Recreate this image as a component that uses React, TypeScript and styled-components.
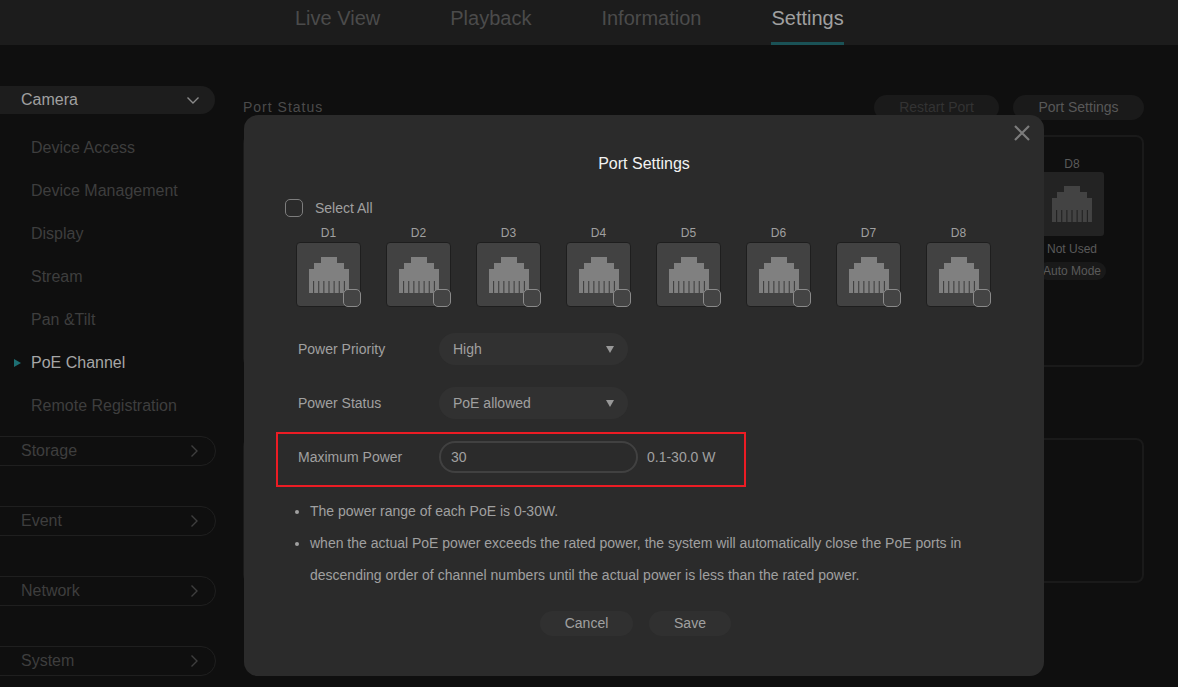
import styled, { createGlobalStyle } from 'styled-components';

const GlobalStyle = createGlobalStyle`
  html, body {
    margin: 0;
    padding: 0;
    height: 100%;
    background: #0f0f0f;
    overflow: hidden;
  }
  * {
    box-sizing: border-box;
  }
`;

const Page = styled.div`
  position: relative;
  width: 1178px;
  height: 687px;
  overflow: hidden;
  background: #0f0f0f;
  font-family: 'Liberation Sans', Arial, sans-serif;
`;

const Header = styled.div`
  height: 45px;
  background: #1c1c1c;
  display: flex;
  padding-left: 295px;
  gap: 70px;
`;

const Tab = styled.div<{ $active?: boolean }>`
  height: 45px;
  padding-top: 6px;
  font-size: 20px;
  line-height: 24px;
  color: ${(p) => (p.$active ? '#a0a0a0' : '#4b4b4b')};
  border-bottom: 3px solid ${(p) => (p.$active ? '#1a5256' : 'transparent')};
`;

const Body = styled.div`
  display: flex;
  padding-top: 41px;
`;

const Sidebar = styled.div`
  width: 216px;
  flex-shrink: 0;
  margin-right: 27px;
`;

const GroupPill = styled.div<{ $open?: boolean }>`
  height: ${(p) => (p.$open ? '28px' : '30px')};
  margin-left: -20px;
  margin-right: ${(p) => (p.$open ? '1px' : '0')};
  margin-bottom: ${(p) => (p.$open ? '0' : '40px')};
  padding: ${(p) => (p.$open ? '0 15px 0 41px' : '0 14px 0 40px')};
  border-radius: 15px;
  display: flex;
  align-items: center;
  justify-content: space-between;
  font-size: 16px;
  color: ${(p) => (p.$open ? '#a0a0a0' : '#3e3e3e')};
  background: ${(p) => (p.$open ? '#1d1d1d' : 'transparent')};
  border: ${(p) => (p.$open ? 'none' : '1px solid #1f1f1f')};
`;

const SubList = styled.div`
  padding-top: 12px;
  margin-bottom: 9px;
`;

const SubItem = styled.div<{ $active?: boolean }>`
  position: relative;
  height: 43px;
  padding-left: 31px;
  font-size: 16px;
  line-height: 43px;
  color: ${(p) => (p.$active ? '#a6a6a6' : '#3e3e3e')};
`;

const ActiveArrow = styled.span`
  position: absolute;
  left: 14px;
  top: 18px;
  width: 0;
  height: 0;
  border-left: 7px solid #1d6f73;
  border-top: 4px solid transparent;
  border-bottom: 4px solid transparent;
`;

const Content = styled.div`
  width: 901px;
`;

const ContentHead = styled.div`
  height: 49px;
  padding-top: 9px;
  display: flex;
  justify-content: space-between;
  align-items: flex-start;
`;

const SectionTitle = styled.div`
  font-size: 14px;
  line-height: 24px;
  letter-spacing: 1px;
  color: #4b4b4b;
`;

const HeadButtons = styled.div`
  display: flex;
  gap: 14px;
`;

const HeadButton = styled.div<{ $disabled?: boolean; $w: number }>`
  width: ${(p) => p.$w}px;
  height: 25px;
  border-radius: 13px;
  background: #1a1a1a;
  text-align: center;
  font-size: 14px;
  line-height: 25px;
  color: ${(p) => (p.$disabled ? '#333333' : '#585858')};
`;

const PortCard = styled.div`
  height: 232px;
  border: 2px solid #1a1a1a;
  border-radius: 8px;
  margin-bottom: 71px;
  display: flex;
  justify-content: flex-end;
  padding: 18px 37px 0 0;
`;

const InfoCard = styled.div`
  height: 145px;
  border: 2px solid #1a1a1a;
  border-radius: 8px;
`;

const BackPort = styled.div`
  width: 66px;
  display: flex;
  flex-direction: column;
  align-items: center;
`;

const BackLabel = styled.div`
  height: 17px;
  font-size: 12px;
  line-height: 18px;
  color: #5a5a5a;
`;

const BackTile = styled.div`
  width: 64px;
  height: 64px;
  border-radius: 3px;
  background: #232323;
  display: flex;
  align-items: center;
  justify-content: center;
  color: #434343;
`;

const BackStatus = styled.div`
  height: 26px;
  font-size: 12px;
  line-height: 26px;
  color: #5a5a5a;
  white-space: nowrap;
`;

const BackMode = styled.div`
  height: 18px;
  padding: 0 5px;
  border-radius: 9px;
  background: #191919;
  font-size: 12px;
  line-height: 18px;
  color: #5a5a5a;
  white-space: nowrap;
`;

const Modal = styled.div`
  position: absolute;
  left: 244px;
  top: 115px;
  width: 800px;
  height: 561px;
  background: #2b2b2b;
  border-radius: 14px;
  padding: 37px 32px 0;
  color: #a0a0a0;
`;

const CloseButton = styled.div`
  position: absolute;
  right: 14px;
  top: 10px;
  width: 16px;
  height: 16px;
  color: #7c7c7c;
`;

const ModalTitle = styled.div`
  text-align: center;
  font-size: 16px;
  line-height: 24px;
  color: #f2f2f2;
  margin-bottom: 23px;
`;

const SelectAllRow = styled.label`
  display: flex;
  align-items: center;
  gap: 12px;
  margin-left: 9px;
  height: 18px;
  font-size: 14px;
`;

const CheckBox = styled.span`
  display: block;
  width: 18px;
  height: 18px;
  border: 1px solid #7d7d7d;
  border-radius: 5px;
`;

const PortRow = styled.div`
  display: flex;
  gap: 25px;
  margin: 8px 0 26px 20px;
`;

const Port = styled.div`
  width: 65px;
`;

const PortLabel = styled.div`
  text-align: center;
  font-size: 12px;
  line-height: 16px;
  height: 17px;
  color: #a0a0a0;
`;

const PortTile = styled.div`
  position: relative;
  width: 65px;
  height: 65px;
  border: 1px solid #1e1e1e;
  border-radius: 4px;
  background: #424242;
  color: #808080;
  display: flex;
  align-items: center;
  justify-content: center;
`;

const PortCheck = styled(CheckBox)`
  position: absolute;
  right: -1px;
  bottom: -1px;
  border-color: #8a8a8a;
  background: #444444;
`;

const FormRow = styled.div`
  display: flex;
  align-items: center;
  height: 32px;
  margin-bottom: 22px;
  padding-left: 22px;
  font-size: 14px;
`;

const FormLabel = styled.div`
  width: 141px;
  flex-shrink: 0;
`;

const SelectBox = styled.div`
  width: 189px;
  height: 32px;
  border-radius: 16px;
  background: #313131;
  padding: 0 14px 0 14px;
  display: flex;
  align-items: center;
  justify-content: space-between;
`;

const Caret = styled.span`
  width: 0;
  height: 0;
  border-top: 7px solid #989898;
  border-left: 4.5px solid transparent;
  border-right: 4.5px solid transparent;
`;

const HighlightRow = styled(FormRow)`
  position: relative;
  margin-bottom: 0;
`;

const HighlightFrame = styled.div`
  position: absolute;
  left: 0;
  top: -9px;
  width: 470px;
  height: 55px;
  border: 2px solid #ec1c24;
`;

const PowerInput = styled.div`
  width: 199px;
  height: 32px;
  border: 2px solid #414141;
  border-radius: 16px;
  padding-left: 10px;
  line-height: 28px;
  margin-right: 9px;
`;

const Notes = styled.ul`
  margin: 22px 0 0;
  padding: 0 0 0 34px;
  font-size: 14px;
  line-height: 32px;
`;

const Note = styled.li``;

const ModalFooter = styled.div`
  display: flex;
  justify-content: center;
  gap: 16px;
  margin-top: 20px;
  padding-right: 17px;
`;

const FooterButton = styled.div<{ $w: number }>`
  width: ${(p) => p.$w}px;
  height: 25px;
  border-radius: 13px;
  background: #303030;
  text-align: center;
  font-size: 14px;
  line-height: 25px;
`;

const Rj45 = ({ size = 40 }: { size?: number }) => {
  const bars = [0, 1, 2, 3, 4, 5, 6, 7];
  return (
    <svg width={size} height={size * 0.9} viewBox="0 0 40 36" fill="currentColor">
      <path d="M12 0h16v6h7v6h5v12H0V12h5V6h7z" />
      {bars.map((b) => (
        <rect key={b} x={b * 5.14} y={24} width={4} height={12} />
      ))}
    </svg>
  );
};

const Chevron = ({ dir }: { dir: 'down' | 'right' }) => (
  <svg width="14" height="14" viewBox="0 0 14 14" fill="none" stroke={dir === 'down' ? '#8a8a8a' : '#3e3e3e'} strokeWidth="1.4">
    {dir === 'down' ? <path d="M1.5 4.5 7 10l5.5-5.5" /> : <path d="M4.5 1.5 10 7l-5.500 5.500" />}
  </svg>
);

const cameraItems = ['Device Access', 'Device Management', 'Display', 'Stream', 'Pan &Tilt', 'PoE Channel', 'Remote Registration'];
const groups = ['Storage', 'Event', 'Network', 'System'];
const ports = ['D1', 'D2', 'D3', 'D4', 'D5', 'D6', 'D7', 'D8'];
const tabs = ['Live View', 'Playback', 'Information', 'Settings'];

export default function App() {
  return (
    <Page>
      <GlobalStyle />
      <Header>
        {tabs.map((t) => (
          <Tab key={t} $active={t === 'Settings'}>
            {t}
          </Tab>
        ))}
      </Header>
      <Body>
        <Sidebar>
          <GroupPill $open>
            Camera
            <Chevron dir="down" />
          </GroupPill>
          <SubList>
            {cameraItems.map((item) => (
              <SubItem key={item} $active={item === 'PoE Channel'}>
                {item === 'PoE Channel' && <ActiveArrow />}
                {item}
              </SubItem>
            ))}
          </SubList>
          {groups.map((g) => (
            <GroupPill key={g}>
              {g}
              <Chevron dir="right" />
            </GroupPill>
          ))}
        </Sidebar>
        <Content>
          <ContentHead>
            <SectionTitle>Port Status</SectionTitle>
            <HeadButtons>
              <HeadButton $disabled $w={125}>
                Restart Port
              </HeadButton>
              <HeadButton $w={131}>Port Settings</HeadButton>
            </HeadButtons>
          </ContentHead>
          <PortCard>
            <BackPort>
              <BackLabel>D8</BackLabel>
              <BackTile>
                <Rj45 />
              </BackTile>
              <BackStatus>Not Used</BackStatus>
              <BackMode>Auto Mode</BackMode>
            </BackPort>
          </PortCard>
          <InfoCard />
        </Content>
      </Body>

      <Modal>
        <CloseButton>
          <svg width="16" height="16" viewBox="0 0 16 16" stroke="currentColor" strokeWidth="2.2" fill="none">
            <path d="M1 1l14 14M15 1 1 15" />
          </svg>
        </CloseButton>
        <ModalTitle>Port Settings</ModalTitle>
        <SelectAllRow>
          <CheckBox />
          Select All
        </SelectAllRow>
        <PortRow>
          {ports.map((p) => (
            <Port key={p}>
              <PortLabel>{p}</PortLabel>
              <PortTile>
                <Rj45 />
                <PortCheck />
              </PortTile>
            </Port>
          ))}
        </PortRow>
        <FormRow>
          <FormLabel>Power Priority</FormLabel>
          <SelectBox>
            High
            <Caret />
          </SelectBox>
        </FormRow>
        <FormRow>
          <FormLabel>Power Status</FormLabel>
          <SelectBox>
            PoE allowed
            <Caret />
          </SelectBox>
        </FormRow>
        <HighlightRow>
          <HighlightFrame />
          <FormLabel>Maximum Power</FormLabel>
          <PowerInput>30</PowerInput>
          0.1-30.0 W
        </HighlightRow>
        <Notes>
          <Note>The power range of each PoE is 0-30W.</Note>
          <Note>
            when the actual PoE power exceeds the rated power, the system will automatically close the PoE ports in
            descending order of channel numbers until the actual power is less than the rated power.
          </Note>
        </Notes>
        <ModalFooter>
          <FooterButton $w={93}>Cancel</FooterButton>
          <FooterButton $w={82}>Save</FooterButton>
        </ModalFooter>
      </Modal>
    </Page>
  );
}
